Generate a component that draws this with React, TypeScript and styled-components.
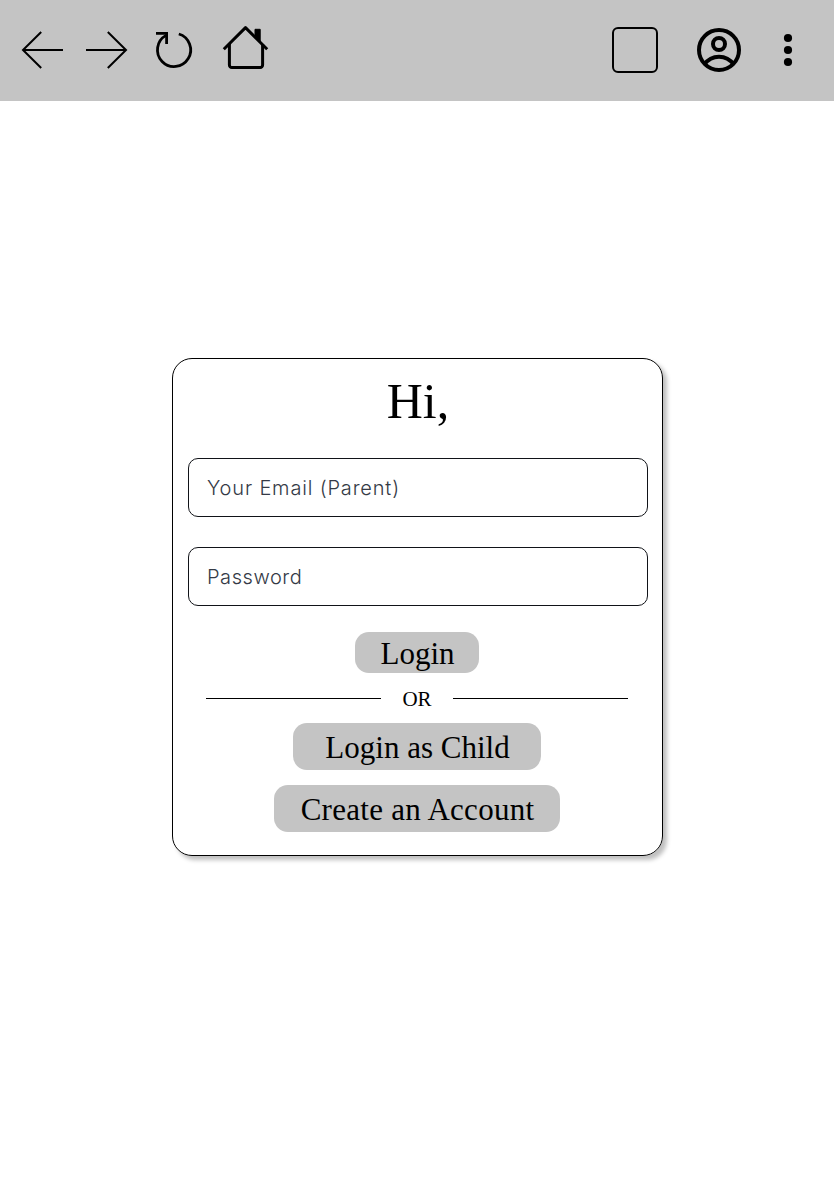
import React from "react";
import styled, { createGlobalStyle } from "styled-components";

const GlobalStyle = createGlobalStyle`
  * { box-sizing: border-box; }
  body { margin: 0; background: #fff; color: #000; }
`;

const serif = `"Liberation Serif", "Times New Roman", serif`;

const Page = styled.div`
  min-height: 1194px;
  display: flex;
  flex-direction: column;
  align-items: center;
`;

const Toolbar = styled.header`
  width: 100%;
  height: 101px;
  padding: 26px 38px 0 20px;
  background: #c4c4c4;
  display: flex;
  justify-content: space-between;
`;

const ToolGroup = styled.div<{ $gap: number }>`
  display: flex;
  align-items: flex-start;
  gap: ${(p) => p.$gap}px;
`;

const Icon = styled.svg`
  display: block;
  height: 48px;
  fill: none;
  stroke: #000;
`;

const TabBox = styled.div`
  width: 46px;
  height: 46px;
  margin-top: 1px;
  border: 2px solid #000;
  border-radius: 6px;
`;

const Card = styled.main`
  width: 491px;
  height: 498px;
  margin: 257px 0 0 1px;
  padding-right: 1px;
  border: 1px solid #000;
  border-radius: 20px;
  box-shadow: 4px 4px 4px rgba(0, 0, 0, 0.25);
  display: flex;
  flex-direction: column;
  align-items: center;
`;

const Title = styled.h1`
  margin: 13px 0 28px 2px;
  font: 400 50px/58px ${serif};
`;

const Field = styled.input<{ $tracking: number }>`
  align-self: flex-start;
  flex: none;
  width: 460px;
  height: 59px;
  margin: 0 0 30px 15px;
  padding: 1px 18px 0;
  border: 1px solid #111318;
  border-radius: 10px;
  background: #fff;
  font: 350 20px Inter, "Open Sans", sans-serif;
  letter-spacing: ${(p) => p.$tracking}px;
  &::placeholder { color: #343a46; opacity: 1; }
`;

const Button = styled.button<{ $width: number; $height: number; $tracking?: number }>`
  flex: none;
  width: ${(p) => p.$width}px;
  height: ${(p) => p.$height}px;
  padding: 2px 0 0 1px;
  border: 0;
  border-radius: 14px;
  background: #c4c4c4;
  color: #000;
  font: 400 31px/36px ${serif};
  letter-spacing: ${(p) => p.$tracking ?? 0}px;
`;

const Divider = styled.div`
  width: 422px;
  height: 50px;
  display: grid;
  grid-template-columns: 175px 1fr 175px;
  align-items: center;
  text-align: center;
  font: 400 21px/24px ${serif};
`;

const DividerText = styled.span`
  padding-top: 2px;
`;

const Rule = styled.span`
  height: 1px;
  margin-top: 1px;
  background: #000;
`;

const Actions = styled.div`
  display: flex;
  flex-direction: column;
  align-items: center;
  gap: 15px;
`;

const LoginSlot = styled.div`
  display: flex;
  margin-top: -4px;
`;

export default function App() {
  return (
    <>
      <GlobalStyle />
      <Page>
        <Toolbar>
          <ToolGroup $gap={20}>
            <Icon width="44" viewBox="20 26 44 48" strokeWidth="2" aria-label="Back">
              <path d="M63 50H23M41.2 32L23 50l18.2 18" />
            </Icon>
            <Icon width="46" viewBox="84 26 46 48" strokeWidth="2" aria-label="Forward">
              <path d="M86 50h40M107.8 32L126 50l-18.2 18" />
            </Icon>
            <Icon width="48" viewBox="150 26 48 48" strokeWidth="2.8" aria-label="Reload">
              <path d="M178.8 34A16.6 16.6 0 1 1 166 35.4" />
              <path d="M156 33.4h10.6V44" />
            </Icon>
            <Icon width="54" viewBox="218 26 54 48" strokeWidth="3" strokeLinejoin="round" aria-label="Home">
              <path d="M223.8 49.2l21.7-21.6 21.7 21.6" />
              <path d="M229.4 44v21a2.4 2.4 0 0 0 2.4 2.5h28.4a2.4 2.4 0 0 0 2.4-2.5V44" />
              <path d="M255 29.3h5.2V42l-5.2-5.4z" fill="#000" stroke="#000" strokeWidth="1" />
            </Icon>
          </ToolGroup>
          <ToolGroup $gap={39}>
            <TabBox />
            <Icon width="44" viewBox="697 26 44 48" strokeWidth="4" aria-label="Account">
              <circle cx="719" cy="50" r="20" />
              <circle cx="719" cy="44" r="6" />
              <path d="M704.5 64.5a17.5 17.5 0 0 1 29 0" />
            </Icon>
            <Icon width="16" viewBox="780 26 16 48" aria-label="Menu">
              <g fill="#000" stroke="none">
                <circle cx="788" cy="38" r="4.1" />
                <circle cx="788" cy="50" r="4.1" />
                <circle cx="788" cy="62" r="4.1" />
              </g>
            </Icon>
          </ToolGroup>
        </Toolbar>
        <Card>
          <Title>Hi,</Title>
          <Field type="text" placeholder="Your Email (Parent)" $tracking={0.83} />
          <Field type="password" placeholder="Password" $tracking={0.55} />
          <LoginSlot>
            <Button $width={124} $height={41}>Login</Button>
          </LoginSlot>
          <Divider>
            <Rule />
            <DividerText>OR</DividerText>
            <Rule />
          </Divider>
          <Actions>
            <Button $width={248} $height={47}>Login as Child</Button>
            <Button $width={286} $height={47} $tracking={0.28}>Create an Account</Button>
          </Actions>
        </Card>
      </Page>
    </>
  );
}
